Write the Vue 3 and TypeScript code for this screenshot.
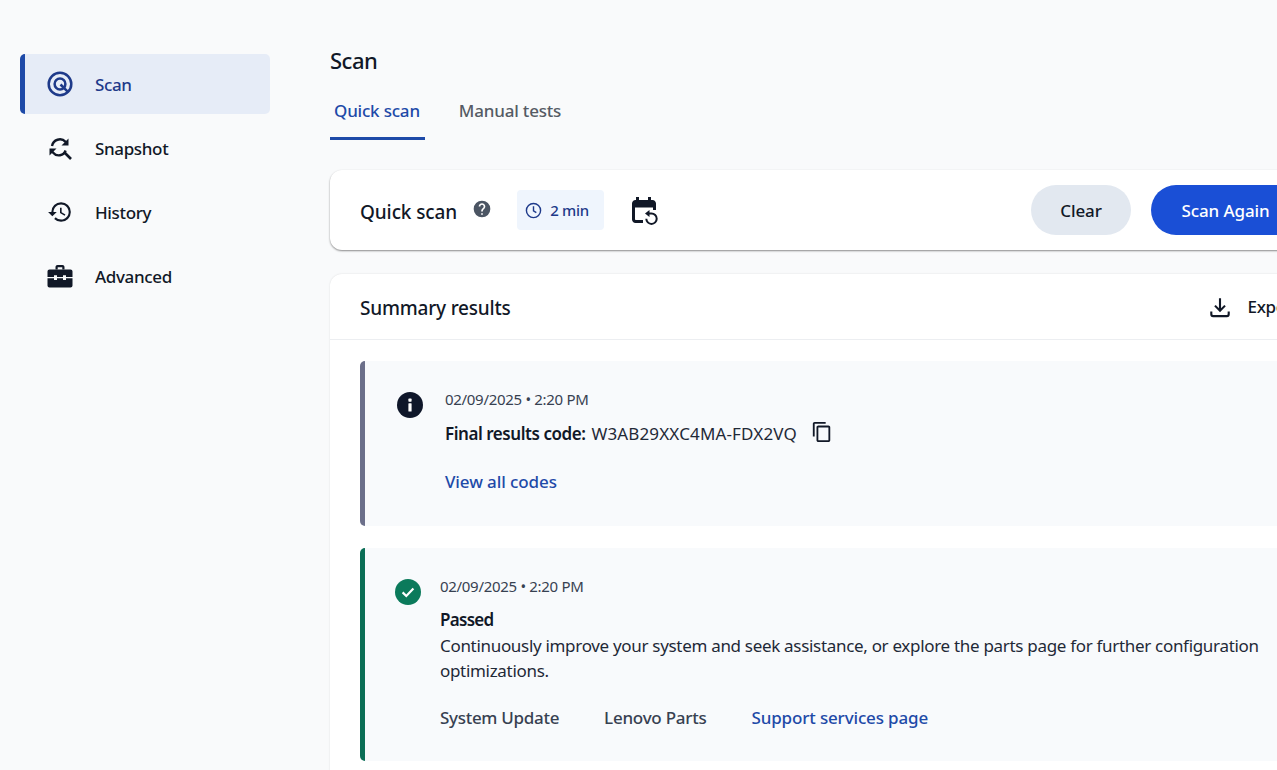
<script setup lang="ts">
const nav = [
  { label: 'Scan', icon: 'scan', active: true },
  { label: 'Snapshot', icon: 'snapshot', active: false },
  { label: 'History', icon: 'history', active: false },
  { label: 'Advanced', icon: 'advanced', active: false },
]
</script>

<template>
  <div class="page">
    <aside class="sidebar">
      <a v-for="n in nav" :key="n.label" class="nav-item" :class="{ active: n.active }">
        <svg v-if="n.icon === 'scan'" class="nav-icon" viewBox="0 0 26 26" fill="none" stroke="currentColor" stroke-width="2.500">
          <circle cx="13" cy="13" r="11.300" />
          <circle cx="13" cy="13" r="5.400" />
          <path d="M13.500 13.500l7.200 7.200" />
        </svg>
        <svg v-else-if="n.icon === 'snapshot'" class="nav-icon" viewBox="0 0 26 26" fill="none" stroke="currentColor" stroke-width="2.400">
          <path d="M5 11a8 8 0 0 1 13.600-4.200l1.400 1.500" />
          <path d="M21.500 3.500v7h-7z" fill="currentColor" stroke="none" />
          <path d="M18.600 15.500a7.200 7.200 0 0 1-12.400 2.200l-1.400-1.400" />
          <path d="M2.500 20.500v-7h7z" fill="currentColor" stroke="none" />
          <path d="M17 17l7 7" stroke-width="2.600" />
        </svg>
        <svg v-else-if="n.icon === 'history'" class="nav-icon" viewBox="0 0 24 24" fill="currentColor">
          <path d="M13 3a9 9 0 0 0-9 9H1l3.890 3.890.07.14L9 12H6c0-3.870 3.130-7 7-7s7 3.130 7 7-3.130 7-7 7c-1.930 0-3.680-.79-4.940-2.060l-1.420 1.420A8.954 8.954 0 0 0 13 21a9 9 0 0 0 0-18zm-1 5v5l4.280 2.540.72-1.210-3.500-2.080V8H12z" />
        </svg>
        <svg v-else class="nav-icon" viewBox="0 0 26 26" fill="currentColor">
          <path d="M8.500 6.500V4c0-1.200.9-2 2-2h5c1.100 0 2 .8 2 2v2.500h-2.200V4.200h-4.600v2.300H8.500z" />
          <path d="M.5 8.500c0-1.200.9-2 2-2h21c1.100 0 2 .8 2 2V14h-6.500v-1.800H16V14h-6v-1.800H7V14H.5V8.500z" />
          <path d="M.5 15.300H7V17h3v-1.700h6V17h3v-1.700h6.500v7.200c0 1.200-.9 2-2 2h-21c-1.100 0-2-.8-2-2v-7.200z" />
        </svg>
        <span>{{ n.label }}</span>
      </a>
    </aside>

    <main class="main">
      <h1 class="title">Scan</h1>
      <div class="tabs">
        <div class="tab tab-active">Quick scan</div>
        <div class="tab">Manual tests</div>
      </div>

      <section class="scan-bar">
        <div class="scan-left">
          <span class="scan-name">Quick scan</span>
          <svg class="help" viewBox="0 0 24 24" fill="#4b5563">
            <path d="M12 2a10 10 0 1 0 0 20 10 10 0 0 0 0-20zm1 17h-2v-2h2v2zm2.070-7.750-.9.920C13.450 12.900 13 13.500 13 15h-2v-.5c0-1.100.45-2.100 1.170-2.830l1.240-1.260c.37-.36.590-.86.590-1.410 0-1.100-.9-2-2-2s-2 .9-2 2H8c0-2.210 1.790-4 4-4s4 1.790 4 4c0 .88-.36 1.680-.93 2.250z" />
          </svg>
          <span class="time">
            <svg class="clock" viewBox="0 0 24 24" fill="none" stroke="currentColor" stroke-width="2">
              <circle cx="12" cy="12" r="10" />
              <path d="M12 6v6.500l4 2.400" />
            </svg>
            2 min
          </span>
          <svg class="cal" viewBox="0 0 28 28">
            <path d="M5 0h3v3h9V0h3v3h1.500C23.400 3 25 4.600 25 6.500V13h-3v-2.500H4V22c0 .6.400 1 1 1h7v3H4.500C2.600 26 1 24.400 1 22.500v-16C1 4.600 2.600 3 4.500 3H5V0z" fill="#111827" />
            <path d="M18 16.500h2.500a5.200 5.200 0 1 1-5.200 5.200" fill="none" stroke="#111827" stroke-width="2" />
            <path d="M18.500 13v7l-4.500-3.500z" fill="#111827" />
          </svg>
        </div>
        <div class="scan-actions">
          <button class="btn btn-clear">Clear</button>
          <button class="btn btn-primary">Scan Again</button>
        </div>
      </section>

      <section class="summary">
        <header class="summary-head">
          <span class="summary-title">Summary results</span>
          <span class="export">
            <svg class="dl" viewBox="0 0 24 24" fill="none" stroke="#111827" stroke-width="2.300">
              <path d="M12 2.500v13M6.500 10.500l5.500 5.500 5.500-5.500" />
              <path d="M2.500 17v3c0 1.300.8 2 2 2h15c1.200 0 2-.7 2-2v-3" />
            </svg>
            Export
          </span>
        </header>

        <div class="alerts">
          <article class="alert alert-info">
            <svg class="alert-icon" viewBox="0 0 26 26">
              <circle cx="13" cy="13" r="13" fill="#0f172a" />
              <rect x="11.400" y="11.200" width="3.200" height="8.300" rx=".6" fill="#fff" />
              <rect x="11.400" y="6.600" width="3.200" height="3.100" rx=".6" fill="#fff" />
            </svg>
            <div class="alert-body">
              <div class="stamp">02/09/2025 • 2:20 PM</div>
              <div class="code-line">
                <strong>Final results code:</strong>&nbsp;<span>W3AB29XXC4MA-FDX2VQ</span>
                <svg class="copy" viewBox="0 0 24 24" fill="#111827">
                  <path d="M16 1H4C2.900 1 2 1.900 2 3v14h2V3h12V1zm3 4H8C6.900 5 6 5.900 6 7v14c0 1.100.9 2 2 2h11c1.100 0 2-.9 2-2V7c0-1.100-.9-2-2-2zm0 16H8V7h11v14z" />
                </svg>
              </div>
              <a class="link view-codes">View all codes</a>
            </div>
          </article>

          <article class="alert alert-pass">
            <svg class="alert-icon" viewBox="0 0 26 26">
              <circle cx="13" cy="13" r="13" fill="#0b7a5b" />
              <path d="M7.600 13.400l3.700 3.600 7.100-7.400" fill="none" stroke="#fff" stroke-width="2.200" />
            </svg>
            <div class="alert-body">
              <div class="stamp">02/09/2025 • 2:20 PM</div>
              <div class="passed">Passed</div>
              <p class="desc">Continuously improve your system and seek assistance, or explore the parts page for further configuration optimizations.</p>
              <div class="links">
                <a class="plain">System Update</a>
                <a class="plain parts">Lenovo Parts</a>
                <a class="link support">Support services page</a>
              </div>
            </div>
          </article>
        </div>
      </section>
    </main>
  </div>
</template>

<style>
html, body { margin: 0; height: 100%; overflow: hidden; background: #f9fafb; }
</style>

<style scoped>
.page {
  display: flex;
  width: 1400px;
  height: 770px;
  overflow: hidden;
  background: #f9fafb;
  color: #111827;
  font-family: "Noto Sans", "Open Sans", sans-serif;
  font-size: 17px;
}
.sidebar {
  width: 250px;
  margin-left: 20px;
  margin-top: 54px;
  display: flex;
  flex-direction: column;
  gap: 4px;
  flex-shrink: 0;
}
.nav-item {
  height: 60px;
  display: flex;
  align-items: center;
  gap: 22px;
  padding-left: 27px;
  box-sizing: border-box;
  border-radius: 5px;
  font-size: 17px;
  font-weight: 500;
  letter-spacing: -0.35px;
  color: #111827;
}
.nav-item.active {
  background: #e6ecf7;
  color: #1e3a8a;
  border-left: 5px solid #1e4aa8;
  padding-left: 22px;
}
.nav-icon { width: 26px; height: 26px; flex-shrink: 0; }
.main { width: 1000px; margin-left: 60px; flex-shrink: 0; }
.title { margin: 45px 0 0; font-size: 22px; line-height: 30px; font-weight: 500; letter-spacing: -0.5px; }
.tabs { display: flex; gap: 30px; margin-top: 6px; height: 59px; box-sizing: border-box; }
.tab {
  padding: 0 5px 0 4px;
  height: 59px;
  line-height: 60px;
  box-sizing: border-box;
  font-size: 17px;
  font-weight: 500;
  letter-spacing: -0.2px;
  color: #555b64;
}
.tab-active { color: #1e4aa8; border-bottom: 3px solid #1e4aa8; }
.scan-bar {
  margin-top: 30px;
  height: 80px;
  box-sizing: border-box;
  padding: 0 30px;
  background: #fff;
  border-radius: 12px;
  box-shadow: 0 1px 2px rgba(0,0,0,.45);
  display: flex;
  align-items: center;
  justify-content: space-between;
}
.scan-left { display: flex; align-items: center; }
.scan-name { font-size: 19px; font-weight: 500; letter-spacing: -0.1px; margin-top: 3px; }
.help { width: 20px; height: 20px; margin-left: 15px; margin-top: -2px; }
.time {
  margin-left: 25px;
  height: 40px;
  width: 87px;
  box-sizing: border-box;
  padding-left: 8px;
  border-radius: 4px;
  background: #eff5fd;
  color: #1e3a8a;
  display: flex;
  align-items: center;
  gap: 8px;
  font-size: 15px;
  font-weight: 500;
  letter-spacing: -0.3px;
}
.clock { width: 17px; height: 17px; }
.cal { width: 28px; height: 28px; margin-left: 27px; margin-top: 2px; }
.scan-actions { display: flex; gap: 20px; }
.btn {
  height: 50px;
  border: 0;
  border-radius: 25px;
  font: inherit;
  font-size: 17px;
  font-weight: 500;
  letter-spacing: -0.1px;
  padding: 0;
}
.btn-clear { width: 100px; background: #e2e8f0; color: #111827; }
.btn-primary { width: 149px; background: #1a4fd6; color: #fff; }
.summary {
  margin-top: 24px;
  background: #fff;
  border-radius: 12px 12px 0 0;
  box-shadow: 0 0 2px rgba(0,0,0,.12);
  min-height: 600px;
}
.summary-head {
  height: 66px;
  box-sizing: border-box;
  border-bottom: 1px solid #eceef1;
  padding: 0 31px 0 30px;
  display: flex;
  align-items: center;
  justify-content: space-between;
}
.summary-title { font-size: 19px; font-weight: 500; letter-spacing: -0.2px; margin-top: 2px; }
.export { display: flex; align-items: center; gap: 16px; font-size: 17px; font-weight: 500; letter-spacing: -0.3px; }
.dl { width: 22px; height: 22px; }
.alerts { padding: 21px 30px 0; display: flex; flex-direction: column; gap: 22px; }
.alert {
  display: flex;
  background: #f8fafc;
  border-radius: 5px;
  box-sizing: border-box;
  border-left: 5px solid;
}
.alert-info { border-color: #6b6f8a; height: 165px; padding: 30px 0 0 32px; gap: 22px; }
.alert-pass { border-color: #0b6e56; height: 213px; padding: 30px 0 0 30px; gap: 19px; }
.alert-icon { width: 26px; height: 26px; flex-shrink: 0; margin-top: 1px; }
.alert-body { flex: 1; min-width: 0; }
.stamp { font-size: 15px; line-height: 17px; color: #374151; letter-spacing: -0.3px; }
.code-line { display: flex; align-items: center; margin-top: 13px; height: 24px; font-size: 17px; letter-spacing: -0.45px; white-space: pre; }
.code-line strong { font-weight: 600; }
.code-line span { color: #1f2937; letter-spacing: 0.15px; margin-left: 2px; }
.copy { width: 22px; height: 22px; margin-left: 14px; margin-top: -2px; }
.link { color: #1e4aa8; font-weight: 500; font-size: 17px; letter-spacing: -0.1px; }
.view-codes { display: block; margin-top: 25px; line-height: 24px; }
.passed { margin-top: 13px; font-size: 17px; line-height: 24px; font-weight: 600; letter-spacing: -0.7px; }
.desc { margin: 1px 0 0; font-size: 17px; line-height: 25px; color: #1f2937; letter-spacing: -0.31px; width: 830px; }
.links { display: flex; gap: 45px; margin-top: 23px; line-height: 24px; }
.plain { color: #374151; font-weight: 500; font-size: 17px; letter-spacing: -0.3px; }
.parts { letter-spacing: -0.25px; }
.support { letter-spacing: -0.15px; }
</style>
